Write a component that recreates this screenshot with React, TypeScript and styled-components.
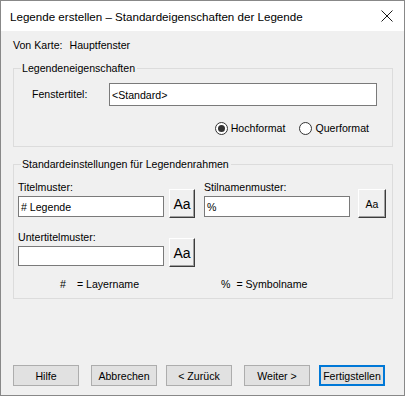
import React from "react";
import styled, { createGlobalStyle } from "styled-components";

const Global = createGlobalStyle`
  html, body { margin: 0; padding: 0; background: #ffffff; }
  * { box-sizing: border-box; }
`;

const Window = styled.div`
  width: 405px;
  height: 396px;
  border: 1px solid #888888;
  background: #f0f0f0;
  display: flex;
  flex-direction: column;
  font-family: "Liberation Sans", Arial, sans-serif;
  font-size: 10.6px;
  color: #000;
`;

const TitleBar = styled.div`
  height: 30px;
  background: #ffffff;
  display: flex;
  align-items: center;
  justify-content: space-between;
  padding: 0 11px 0 9px;
  font-size: 11.6px;
`;

const Body = styled.div`
  flex: 1;
  display: flex;
  flex-direction: column;
  padding: 0 11px 9px 12px;
`;

const InfoRow = styled.div`
  margin-top: 8px;
  line-height: 13px;
  display: flex;
  gap: 7px;
`;

const Group = styled.fieldset<{ $top: number }>`
  margin: ${(p) => p.$top}px 0 0 0;
  border: 1px solid #dcdcdc;
  padding: 0;
  min-width: 0;
`;

const GroupTitle = styled.legend`
  margin-left: 7px;
  padding: 0 2px 0 1px;
  line-height: 13px;
`;

const TitleRow = styled.div`
  display: flex;
  align-items: center;
  margin: 8px 15px 0 18px;
`;

const Label = styled.span<{ $width?: number }>`
  line-height: 13px;
  ${(p) => (p.$width ? `width: ${p.$width}px;` : "")}
`;

const Input = styled.div<{ $width?: number; $height: number }>`
  ${(p) => (p.$width ? `width: ${p.$width}px;` : "flex: 1;")}
  height: ${(p) => p.$height}px;
  background: #ffffff;
  border: 1px solid #7a7a7a;
  padding-left: 2px;
  display: flex;
  align-items: center;
`;

const RadioRow = styled.div`
  display: flex;
  justify-content: flex-end;
  gap: 14px;
  margin: 15px 23px 11px 0;
`;

const Radio = styled.span`
  display: flex;
  align-items: center;
  gap: 3px;
  line-height: 14px;
`;

const Dot = styled.span<{ $on?: boolean }>`
  width: 13px;
  height: 13px;
  border-radius: 50%;
  border: 1px solid #333333;
  background: #ffffff;
  display: flex;
  align-items: center;
  justify-content: center;
  &::after {
    content: "";
    width: 7px;
    height: 7px;
    border-radius: 50%;
    background: ${(p) => (p.$on ? "#333333" : "transparent")};
  }
`;

const FieldGrid = styled.div`
  display: grid;
  grid-template-columns: 177px 182px;
  column-gap: 9px;
  row-gap: 14px;
  margin: 10px 0 0 4px;
`;

const Field = styled.div<{ $gap: number }>`
  display: flex;
  align-items: flex-end;
  gap: ${(p) => p.$gap}px;
`;

const FieldText = styled.div`
  display: flex;
  flex-direction: column;
  gap: 2px;
`;

const FontButton = styled.div<{ $small?: boolean }>`
  width: ${(p) => (p.$small ? 28 : 27)}px;
  height: 29px;
  margin-bottom: -1px;
  background: #f0f0f0;
  border-top: 1px solid #ffffff;
  border-left: 1px solid #ffffff;
  border-right: 1px solid #3c3c3c;
  border-bottom: 1px solid #3c3c3c;
  box-shadow: inset -1px -1px 0 #a0a0a0;
  display: flex;
  align-items: center;
  justify-content: center;
  font-size: ${(p) => (p.$small ? 10.5 : 14)}px;
`;

const KeyRow = styled.div`
  display: grid;
  grid-template-columns: 161px 1fr;
  margin: 12px 0 7px 46px;
  line-height: 13px;
`;

const Key = styled.span<{ $space: number }>`
  display: flex;
  gap: ${(p) => p.$space}px;
`;

const ButtonRow = styled.div`
  margin-top: auto;
  display: flex;
`;

const Button = styled.div<{ $gap?: number; $default?: boolean }>`
  margin-left: ${(p) => p.$gap ?? 0}px;
  width: 66px;
  height: 21px;
  background: #e1e1e1;
  border: ${(p) => (p.$default ? "2px solid #0078d7" : "1px solid #adadad")};
  display: flex;
  align-items: center;
  justify-content: center;
`;

const CloseIcon = () => (
  <svg width="12" height="12" viewBox="0 0 12 12">
    <path d="M0.5 0.5L11.5 11.5M11.5 0.5L0.5 11.5" stroke="#1a1a1a" strokeWidth="1" />
  </svg>
);

export default function App() {
  return (
    <Window>
      <Global />
      <TitleBar>
        <span>Legende erstellen – Standardeigenschaften der Legende</span>
        <CloseIcon />
      </TitleBar>
      <Body>
        <InfoRow>
          <span>Von Karte:</span>
          <span>Hauptfenster</span>
        </InfoRow>

        <Group $top={10}>
          <GroupTitle>Legendeneigenschaften</GroupTitle>
          <TitleRow>
            <Label $width={77}>Fenstertitel:</Label>
            <Input $height={23}>&lt;Standard&gt;</Input>
          </TitleRow>
          <RadioRow>
            <Radio>
              <Dot $on />
              Hochformat
            </Radio>
            <Radio>
              <Dot />
              Querformat
            </Radio>
          </RadioRow>
        </Group>

        <Group $top={11}>
          <GroupTitle>Standardeinstellungen für Legendenrahmen</GroupTitle>
          <FieldGrid>
            <Field $gap={5}>
              <FieldText>
                <Label>Titelmuster:</Label>
                <Input $width={146} $height={21}># Legende</Input>
              </FieldText>
              <FontButton>Aa</FontButton>
            </Field>
            <Field $gap={8}>
              <FieldText>
                <Label>Stilnamenmuster:</Label>
                <Input $width={146} $height={21}>%</Input>
              </FieldText>
              <FontButton $small>Aa</FontButton>
            </Field>
            <Field $gap={5}>
              <FieldText>
                <Label>Untertitelmuster:</Label>
                <Input $width={146} $height={20} />
              </FieldText>
              <FontButton>Aa</FontButton>
            </Field>
          </FieldGrid>
          <KeyRow>
            <Key $space={11}>
              <span>#</span>
              <span>= Layername</span>
            </Key>
            <Key $space={6}>
              <span>%</span>
              <span>= Symbolname</span>
            </Key>
          </KeyRow>
        </Group>

        <ButtonRow>
          <Button>Hilfe</Button>
          <Button $gap={12}>Abbrechen</Button>
          <Button $gap={9}>&lt; Zurück</Button>
          <Button $gap={12}>Weiter &gt;</Button>
          <Button $gap={9} $default>
            Fertigstellen
          </Button>
        </ButtonRow>
      </Body>
    </Window>
  );
}
